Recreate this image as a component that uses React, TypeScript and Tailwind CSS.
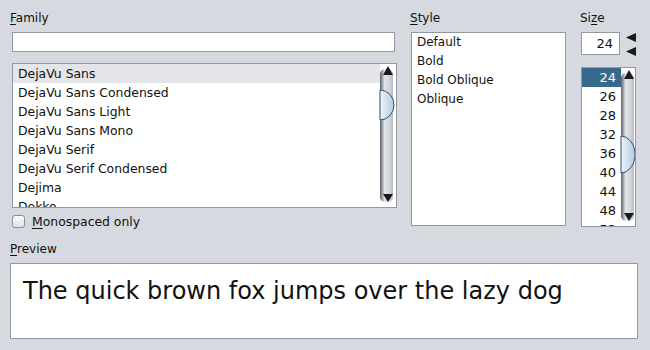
const families = [
  "DejaVu Sans",
  "DejaVu Sans Condensed",
  "DejaVu Sans Light",
  "DejaVu Sans Mono",
  "DejaVu Serif",
  "DejaVu Serif Condensed",
  "Dejima",
  "Dekko",
];
const styles = ["Default", "Bold", "Bold Oblique", "Oblique"];
const sizes = ["24", "26", "28", "32", "36", "40", "44", "48", "52"];

function ScrollBar({ h, thumbY, thumbH }: { h: number; thumbY: number; thumbH: number }) {
  return (
    <svg width={14} height={h} className="shrink-0 overflow-visible">
      <defs>
        <linearGradient id="trk" x1="0" x2="1" y1="0" y2="0">
          <stop offset="0" stopColor="#5c6068" />
          <stop offset="0.18" stopColor="#9da1a8" />
          <stop offset="0.35" stopColor="#e2e4e8" />
          <stop offset="0.7" stopColor="#d3d6db" />
          <stop offset="1" stopColor="#b9bdc3" />
        </linearGradient>
        <linearGradient id="thm" x1="0" x2="1" y1="0" y2="0">
          <stop offset="0" stopColor="#eef4fa" />
          <stop offset="0.5" stopColor="#cfe0ee" />
          <stop offset="1" stopColor="#b3cade" />
        </linearGradient>
      </defs>
      <rect x={0} y={5} width={13} height={h - 10} rx={5} fill="url(#trk)" />
      <polygon points="8,2 3,11 13,11" fill="#1a1a1a" />
      <path
        d={`M0 ${thumbY} A 14 ${thumbH / 2} 0 0 1 0 ${thumbY + thumbH} Z`}
        fill="url(#thm)"
        stroke="#2f4f6c"
        strokeWidth={1}
      />
      <polygon points={`3,${h - 13} 13,${h - 13} 8,${h - 5}`} fill="#1a1a1a" />
    </svg>
  );
}

function Label({ text, u }: { text: string; u: number }) {
  return (
    <div className="h-[16px] leading-[16px]">
      {text.slice(0, u)}
      <span className="underline underline-offset-2">{text[u]}</span>
      {text.slice(u + 1)}
    </div>
  );
}

export default function App() {
  return (
    <div className="w-[650px] h-[350px] overflow-hidden bg-[#d6d9df] pl-[10px] pt-[10px] font-['DejaVu_Sans',sans-serif] text-[12px] text-[#111]">
      <div className="flex">
        <div className="w-[387px]">
          <Label text="Family" u={0} />
          <div className="ml-[2px] mt-[6px] h-[20px] w-[383px] border border-[#9297a0] bg-white" />
          <div className="ml-[2px] mt-[11px] flex h-[145px] w-[385px] overflow-hidden border border-[#9297a0] bg-white text-[12.4px]">
            <div className="w-[367px]">
              {families.map((f, i) => (
                <div
                  key={f}
                  className={`h-[19px] pl-[5px] leading-[19px] ${i === 0 ? "bg-[#e3e5e9]" : ""}`}
                >
                  {f}
                </div>
              ))}
            </div>
            <ScrollBar h={143} thumbY={26} thumbH={30} />
          </div>
          <div className="ml-[2px] mt-[7px] flex h-[13px] items-center gap-[7px]">
            <div className="h-[13px] w-[13px] rounded-[3px] border border-[#8a8f98] bg-gradient-to-b from-[#fbfbfc] to-[#dfe2e7]" />
            <div className="text-[12.4px] leading-[13px]">
              <span className="underline underline-offset-2">M</span>onospaced only
            </div>
          </div>
        </div>

        <div className="ml-[13px] w-[156px]">
          <Label text="Style" u={0} />
          <div className="ml-[1px] mt-[6px] h-[194px] w-[155px] border border-[#9297a0] bg-white">
            {styles.map((s) => (
              <div key={s} className="h-[19px] pl-[5px] leading-[19px]">
                {s}
              </div>
            ))}
          </div>
        </div>

        <div className="ml-[14px] w-[60px]">
          <Label text="Size" u={2} />
          <div className="ml-[1px] mt-[6px] flex items-start">
            <div className="h-[23px] w-[39px] border border-[#9297a0] bg-white pr-[6px] text-right text-[13px] leading-[21px]">
              24
            </div>
            <div className="ml-[6px] flex flex-col gap-[5px] pt-[1px]">
              <svg width={10} height={9}>
                <polygon points="0,4.5 10,0 10,9" fill="#1a1a1a" />
              </svg>
              <svg width={10} height={9}>
                <polygon points="0,4.5 10,0 10,9" fill="#1a1a1a" />
              </svg>
            </div>
          </div>
          <div className="ml-[1px] mt-[11px] flex h-[160px] w-[55px] overflow-hidden border border-[#9297a0] bg-white">
            <div className="w-[39px]">
              {sizes.map((s, i) => (
                <div
                  key={s}
                  className={`h-[19px] pr-[5px] text-right text-[13px] leading-[19px] ${
                    i === 0 ? "bg-[#39698a] text-white" : ""
                  }`}
                >
                  {s}
                </div>
              ))}
            </div>
            <ScrollBar h={158} thumbY={68} thumbH={37} />
          </div>
        </div>
      </div>

      <div className="mt-[13px]">
        <Label text="Preview" u={0} />
      </div>
      <div className="mt-[6px] h-[76px] w-[628px] border border-[#9297a0] bg-white pl-[12px] pt-[13px] text-[24px] leading-[28px]">
        The quick brown fox jumps over the lazy dog
      </div>
    </div>
  );
}
